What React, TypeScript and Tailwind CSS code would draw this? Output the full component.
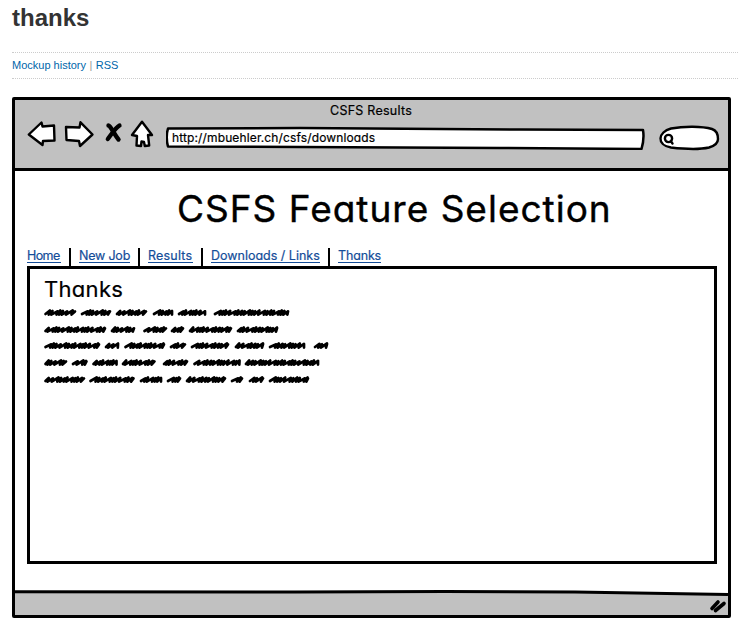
import React from "react";

const sketch = "font-['Inter','Noto_Sans',sans-serif] [font-feature-settings:'cv11','calt'_0]";

const lines: [number, number][][] = [
  [[44.5, 76], [81, 111], [116, 147], [153, 173], [178, 206], [214, 289]],
  [[44.5, 106], [111, 135], [143.5, 167], [171, 184], [189, 232], [237, 278]],
  [[44.5, 100], [105, 119], [124.5, 165], [170, 186], [191, 229], [235, 264], [269, 305], [314, 328]],
  [[44.5, 67], [72, 87.5], [92.5, 117.5], [122, 155.5], [163, 188], [193.5, 240.5], [245, 319]],
  [[44.5, 85], [89.5, 134.5], [140, 162], [167, 181], [186, 226], [231, 243], [249, 264], [269, 309]],
];

const steps = [4.4, 3.2, 5.8, 3.2, 3.2, 4.8, 6.2, 3.2];

function scribble(a: number, b: number, seed: number) {
  const start = a - 44 + 1;
  const end = b - 44 - 1;
  let x = start;
  let i = seed;
  let d = `M${x} 6`;
  while (x < end - 3) {
    const s = steps[i % steps.length];
    const top = 2.5 + (i % 3) * 0.4;
    d += `L${Math.min(x + s, end)} ${top}L${Math.min(x + s - 1.2, end)} 6.6`;
    x += s - 0.6;
    i++;
  }
  return d + `L${end} 3.4`;
}

function Scribbles() {
  return (
    <div className="flex flex-col">
      {lines.map((words, r) => (
        <svg key={r} width="300" height="10" viewBox="0 0 300 10" className="mb-[6.7px] block overflow-visible" fill="none" stroke="#000" strokeWidth="2.7" strokeLinecap="round" strokeLinejoin="round">
          {words.map(([a, b], i) => <path key={i} d={scribble(a, b, i * 2 + r)} />)}
        </svg>
      ))}
    </div>
  );
}

const links: [string, string, string][] = [
  ["Home", "w-[34px]", "tracking-[-0.6px]"],
  ["New Job", "w-[51px]", "tracking-[-0.2px]"],
  ["Results", "w-[45px]", "tracking-[0.2px]"],
  ["Downloads / Links", "w-[109px]", "tracking-[0px]"],
  ["Thanks", "w-[43px]", "tracking-[-0.15px]"],
];

export default function App() {
  return (
    <div className="h-[634px] w-[738px] overflow-hidden bg-white pl-3 font-['Liberation_Sans',Arial,sans-serif]">
      <h1 className="h-[52px] pt-[2px] text-[24px] font-bold leading-[32px] text-[#333]">thanks</h1>
      <div className="h-[27px] border-y border-dotted border-[#ccc] text-[11px] leading-[25px] text-[#999]">
        <a className="text-[#06a]">Mockup history</a><span className="px-[3.5px]">|</span><a className="text-[#06a]">RSS</a>
      </div>

      <div className={`mt-[18px] flex h-[521px] w-[719px] flex-col rounded-[2px] border-[3px] border-black ${sketch}`}>
        <header className="h-[71px] border-b-[3px] border-black bg-[#c1c1c1]">
          <div className="h-[24px] pl-[315px] pt-px text-[12.5px] leading-[20px] tracking-[0.25px] [-webkit-text-stroke:0.2px_black]">CSFS Results</div>
          <div className="flex h-[34px] items-start">
            <svg width="151" height="34" viewBox="15 124 151 34" className="overflow-visible" fill="#fff" stroke="#000" strokeWidth="2.4" strokeLinejoin="round" strokeLinecap="round">
              <path d="M28.8 134.5 41.5 122.5 42.5 126.5 54 125.5 54.500 140.500 43 141 42.5 145Z" />
              <path d="M66 127 79.5 127.5 80.5 122.300 92.500 134.5 80 146 79 141 66.5 140Z" />
              <path d="M108.500 125.500C110.500 125.500 114.500 135 118.500 139.500" strokeWidth="4.4" fill="none" />
              <path d="M119.500 125.500C116 127 111 135 107.800 139" strokeWidth="4.3" fill="none" />
              <path d="M142 121.8 152 135H148L149.200 145.500 144.8 146 144 142 141.5 141.5 141 146 136.5 145.500 137 136 132 135Z" />
            </svg>
            <div className="relative h-[26px] w-[480px]">
              <svg className="absolute inset-0" width="480" height="26" viewBox="166 124 480 26" fill="#fff" stroke="#000" strokeWidth="2.5" strokeLinejoin="round">
                <path d="M168 128.5 300 128 520 129.5 643 130Q644.500 139 641.500 149L500 148 300 147 168 146.5Q165.500 137 168 128.500Z" />
              </svg>
              <div className="relative pl-[6px] pt-[4px] text-[12px] leading-[20px] tracking-[0.13px] [-webkit-text-stroke:0.2px_black]">http://mbuehler.ch/csfs/downloads</div>
            </div>
            <svg width="70" height="34" viewBox="646 124 70 34" className="overflow-visible" fill="#fff" stroke="#000" strokeWidth="2.4" strokeLinecap="round">
              <path d="M671 128.500C684 126 702 126 712 129Q718 131 718 139 718 145 709 147.500C698 150 684 149 671 147.500 656 145 658 132 671 128.500Z" />
              <circle cx="668.500" cy="138.500" r="3.600" />
              <path d="M671 141.500 672.500 143.500" />
            </svg>
          </div>
        </header>

        <main className="h-[422px] pl-[12px]">
          <h2 className="h-[77px] pl-[150px] pt-[14px] text-[37px] leading-[48px] tracking-[1px] [-webkit-text-stroke:0.4px_black]">CSFS Feature Selection</h2>
          <nav className="flex h-[18px] items-stretch">
            {links.map(([name, width, track], i) => (
              <div key={name} className={`h-[18px] ${i ? "ml-2 border-l-2 border-black pl-2" : ""}`}>
                <a className={`block h-[15px] whitespace-nowrap border-b border-[#144d99] text-[12.5px] leading-[15px] text-[#144d99] [-webkit-text-stroke:0.2px_#144d99] ${width} ${track}`}>{name}</a>
              </div>
            ))}
          </nav>
          <section className="h-[298px] w-[690px] border-[3px] border-black pl-[14px]">
            <h3 className="h-[39px] pt-[5px] text-[22px] leading-[30px] tracking-[0.3px] [-webkit-text-stroke:0.2px_black]">Thanks</h3>
            <Scribbles />
          </section>
        </main>
        <footer className="relative flex-1">
          <svg className="block overflow-visible" width="713" height="22" viewBox="0 0 713 22">
            <path d="M0 -1 350 -1 560 -1 713 2V22H0Z" fill="#c1c1c1" />
            <path d="M0 -1.300 280 -1 430 -1.500 560 -1 713 1.500" fill="none" stroke="#000" strokeWidth="3" />
            <path d="M697 15.500 703 9M700.500 17.500 709 10.500" stroke="#000" strokeWidth="3.600" strokeLinecap="round" />
          </svg>
        </footer>
      </div>
    </div>
  );
}
